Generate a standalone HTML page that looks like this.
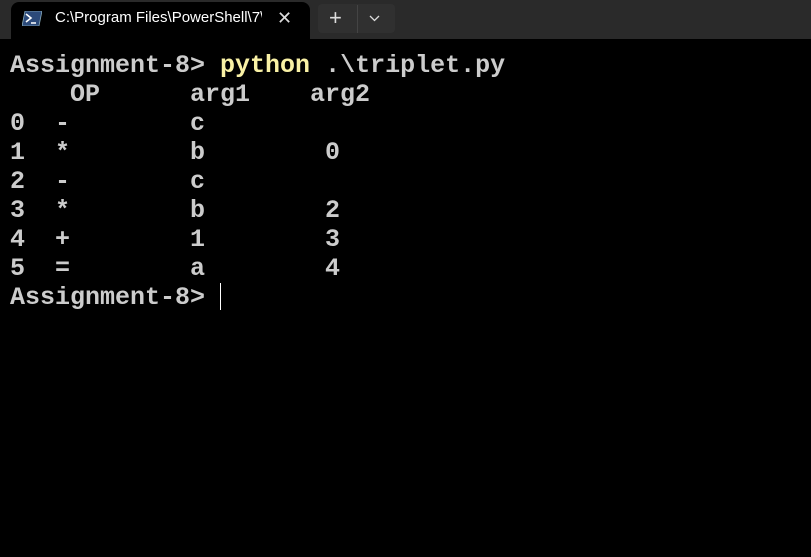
<!DOCTYPE html>
<html><head><style>
html,body{margin:0;padding:0;width:811px;height:557px;background:#0c0c0c;overflow:hidden}
body{background:#000;position:relative}
.bar{position:absolute;left:0;top:0;width:811px;height:39px;background:#2a2a2a}
.tab{position:absolute;left:11px;top:2px;width:299px;height:37px;background:#000;border-radius:8px 8px 0 0}
.title{position:absolute;left:55px;top:9px;font:15px "Liberation Sans",sans-serif;color:#fff;white-space:nowrap;width:207px;overflow:hidden}
.x{position:absolute;left:277px;top:8px;color:#ddd;font:18px "Liberation Sans",sans-serif}
.btns{position:absolute;left:318px;top:4px;width:77px;height:29px;background:#303030;border-radius:4px}
.sep{position:absolute;left:357px;top:5px;width:1px;height:28px;background:#444}
.plus{position:absolute;left:329px;top:5px;color:#ddd;font:22px "Liberation Sans",sans-serif}
pre{position:absolute;left:10px;top:51px;margin:0;font:bold 25px/29px "Liberation Mono","DejaVu Sans Mono",monospace;color:#cccccc}
.y{color:#f9f1a5}
.cur{position:absolute;left:220px;top:283px;width:1px;height:27px;background:#fff}
</style></head><body>
<div class="bar"></div>
<div class="tab"></div>
<svg style="position:absolute;left:22px;top:11px" width="20" height="15" viewBox="0 0 20 15"><polygon points="3,0 20,0 17,15 0,15" fill="#2c4a7a" stroke="#8ab" stroke-width="0.8"/><path d="M4 3 L9 7 L4 11" stroke="#fff" stroke-width="1.6" fill="none"/><path d="M9 12 H14" stroke="#fff" stroke-width="1.5"/></svg>
<div class="title">C:\Program Files\PowerShell\7\pwsh.exe</div>
<div class="x">✕</div>
<div class="btns"></div>
<div class="sep"></div>
<div class="plus">+</div>
<svg style="position:absolute;left:369px;top:15px" width="11" height="7" viewBox="0 0 11 7"><path d="M1 1 L5.5 5.5 L10 1" stroke="#ddd" stroke-width="1.3" fill="none"/></svg>
<pre>Assignment-8&gt; <span class="y">python</span> .\triplet.py
    OP      arg1    arg2
0  -        c
1  *        b        0
2  -        c
3  *        b        2
4  +        1        3
5  =        a        4
Assignment-8&gt; </pre>
<div class="cur"></div>
</body></html>
